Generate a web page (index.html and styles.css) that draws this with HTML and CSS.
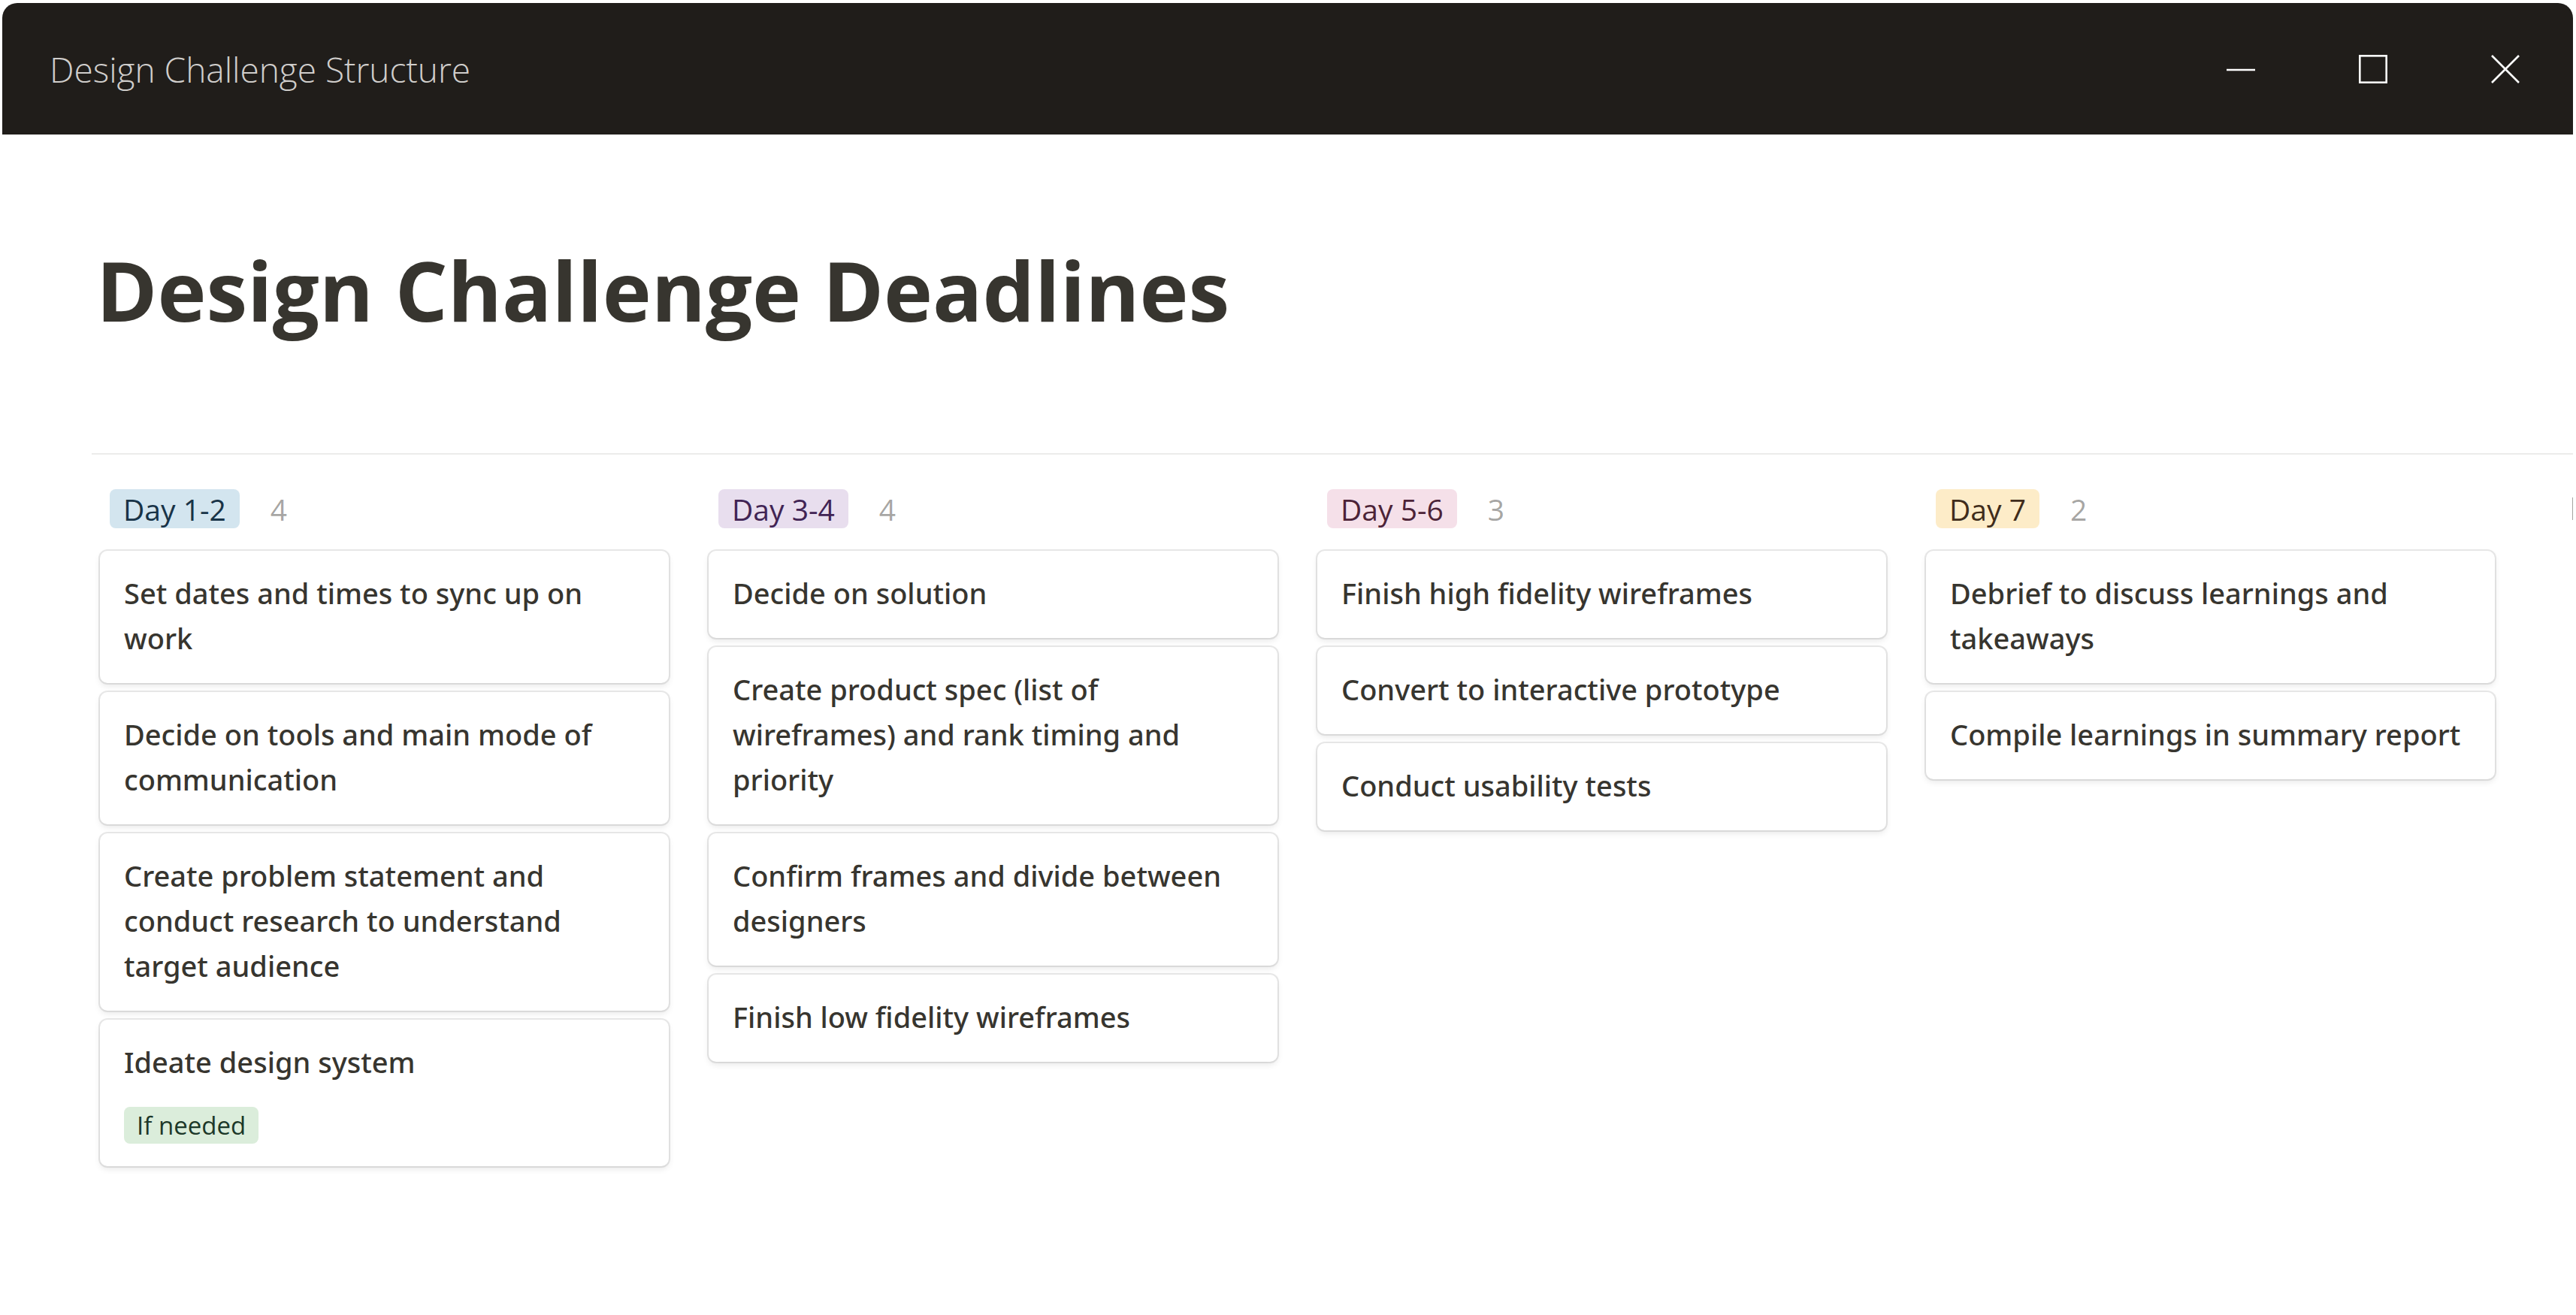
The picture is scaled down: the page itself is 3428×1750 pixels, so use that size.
FILE: index.html
```html
<!DOCTYPE html>
<html lang="en">
<head>
<meta charset="utf-8">
<title>Design Challenge Structure</title>
<link rel="stylesheet" href="styles.css">
</head>
<body>
<div class="window">
  <header class="titlebar">
    <div class="titlebar-text">Design Challenge Structure</div>
    <div class="controls">
      <div class="ctl">
        <svg width="40" height="40" viewBox="0 0 40 40"><line x1="1" y1="21" x2="39" y2="21" stroke="#ffffff" stroke-width="2.6"/></svg>
      </div>
      <div class="ctl">
        <svg width="40" height="40" viewBox="0 0 40 40"><rect x="2.3" y="2.3" width="35.4" height="35.4" fill="none" stroke="#ffffff" stroke-width="2.6"/></svg>
      </div>
      <div class="ctl">
        <svg width="40" height="40" viewBox="0 0 40 40"><path d="M2 2 L38 38 M38 2 L2 38" stroke="#ffffff" stroke-width="2.6" fill="none"/></svg>
      </div>
    </div>
  </header>

  <main class="page">
    <h1 class="page-title">Design Challenge Deadlines</h1>

    <div class="board">
      <section class="column">
        <div class="col-head"><span class="tag tag-blue">Day 1-2</span><span class="count">4</span></div>
        <div class="cards">
          <div class="card"><div class="card-title">Set dates and times to sync up on work</div></div>
          <div class="card"><div class="card-title">Decide on tools and main mode of communication</div></div>
          <div class="card"><div class="card-title">Create problem statement and conduct research to understand target audience</div></div>
          <div class="card"><div class="card-title">Ideate design system</div><div class="card-props"><span class="prop prop-green">If needed</span></div></div>
        </div>
      </section>

      <section class="column">
        <div class="col-head"><span class="tag tag-purple">Day 3-4</span><span class="count">4</span></div>
        <div class="cards">
          <div class="card"><div class="card-title">Decide on solution</div></div>
          <div class="card"><div class="card-title">Create product spec (list of wireframes) and rank timing and priority</div></div>
          <div class="card"><div class="card-title">Confirm frames and divide between designers</div></div>
          <div class="card"><div class="card-title">Finish low fidelity wireframes</div></div>
        </div>
      </section>

      <section class="column">
        <div class="col-head"><span class="tag tag-pink">Day 5-6</span><span class="count">3</span></div>
        <div class="cards">
          <div class="card"><div class="card-title">Finish high fidelity wireframes</div></div>
          <div class="card"><div class="card-title">Convert to interactive prototype</div></div>
          <div class="card"><div class="card-title">Conduct usability tests</div></div>
        </div>
      </section>

      <section class="column">
        <div class="col-head"><span class="tag tag-yellow">Day 7</span><span class="count">2</span></div>
        <div class="cards">
          <div class="card"><div class="card-title">Debrief to discuss learnings and takeaways</div></div>
          <div class="card"><div class="card-title">Compile learnings in summary report</div></div>
        </div>
      </section>

      <section class="column-hidden">
        <div class="col-head"><span class="hidden-edge"></span></div>
      </section>
    </div>
  </main>
</div>
</body>
</html>
```
FILE: styles.css
```css
html, body {
  margin: 0;
  padding: 0;
  background: #ffffff;
}

body {
  font-family: "Open Sans", "Noto Sans", "Liberation Sans", sans-serif;
  color: rgb(55, 53, 47);
}

.window {
  margin: 4px 4px 0 3px;
  height: 1746px;
  border-radius: 20px 20px 0 0;
  overflow: hidden;
  background: #ffffff;
}

.titlebar {
  height: 175px;
  background: #201d1a;
  display: flex;
  align-items: center;
  justify-content: space-between;
  padding-left: 63px;
  padding-right: 2px;
}

.titlebar-text {
  font-family: "Open Sans", "Noto Sans", sans-serif;
  font-weight: 350;
  font-size: 46px;
  color: #d0cecc;
}

.controls {
  display: flex;
  height: 100%;
}

.ctl {
  width: 176px;
  height: 100%;
  display: flex;
  align-items: center;
  justify-content: center;
}

.page {
  padding-left: 119px;
}

.page-title {
  margin: 142px 0 0 6px;
  font-size: 110px;
  line-height: 128px;
  font-weight: 700;
  color: rgb(55, 53, 47);
}

.board {
  margin-top: 154px;
  border-top: 2px solid #ececeb;
  padding: 46px 0 0 11px;
  display: flex;
  gap: 53px;
  align-items: flex-start;
}

.column {
  width: 757px;
  flex: 0 0 757px;
}

.column-hidden {
  flex: 0 0 auto;
  padding-left: 50px;
}

.col-head {
  height: 52px;
  display: flex;
  align-items: center;
  padding-left: 13px;
}

.column-hidden .col-head {
  padding-left: 0;
}

.hidden-edge {
  display: block;
  width: 4px;
  height: 30px;
  background: rgba(55, 53, 47, 0.45);
}

.tag {
  display: inline-flex;
  align-items: center;
  height: 52px;
  padding: 0 18px;
  border-radius: 8px;
  font-size: 39px;
  font-weight: 400;
  white-space: nowrap;
}

.tag-blue { background: rgb(211, 229, 239); color: rgb(24, 51, 71); }
.tag-purple { background: rgb(232, 222, 238); color: rgb(65, 36, 84); }
.tag-pink { background: rgb(245, 224, 233); color: rgb(76, 35, 55); }
.tag-yellow { background: rgb(253, 236, 200); color: rgb(64, 44, 27); }

.count {
  margin-left: 41px;
  font-size: 39px;
  color: rgba(55, 53, 47, 0.45);
}

.cards {
  margin-top: 30px;
  display: flex;
  flex-direction: column;
  gap: 12px;
}

.card {
  background: #ffffff;
  border-radius: 10px;
  box-shadow: 0 0 0 2px rgba(15, 15, 15, 0.09), 0 4px 8px rgba(15, 15, 15, 0.09);
  padding: 26px 26px 30px 32px;
}

.card-title {
  font-family: "Noto Sans", "Open Sans", sans-serif;
  font-size: 38px;
  font-weight: 500;
  line-height: 60px;
  color: rgb(55, 53, 47);
}

.card-props {
  margin-top: 30px;
  display: flex;
}

.prop {
  display: inline-flex;
  align-items: center;
  height: 49px;
  padding: 0 17px;
  border-radius: 8px;
  font-size: 33px;
  white-space: nowrap;
}

.prop-green { background: rgb(219, 237, 219); color: rgb(28, 56, 41); }
```
